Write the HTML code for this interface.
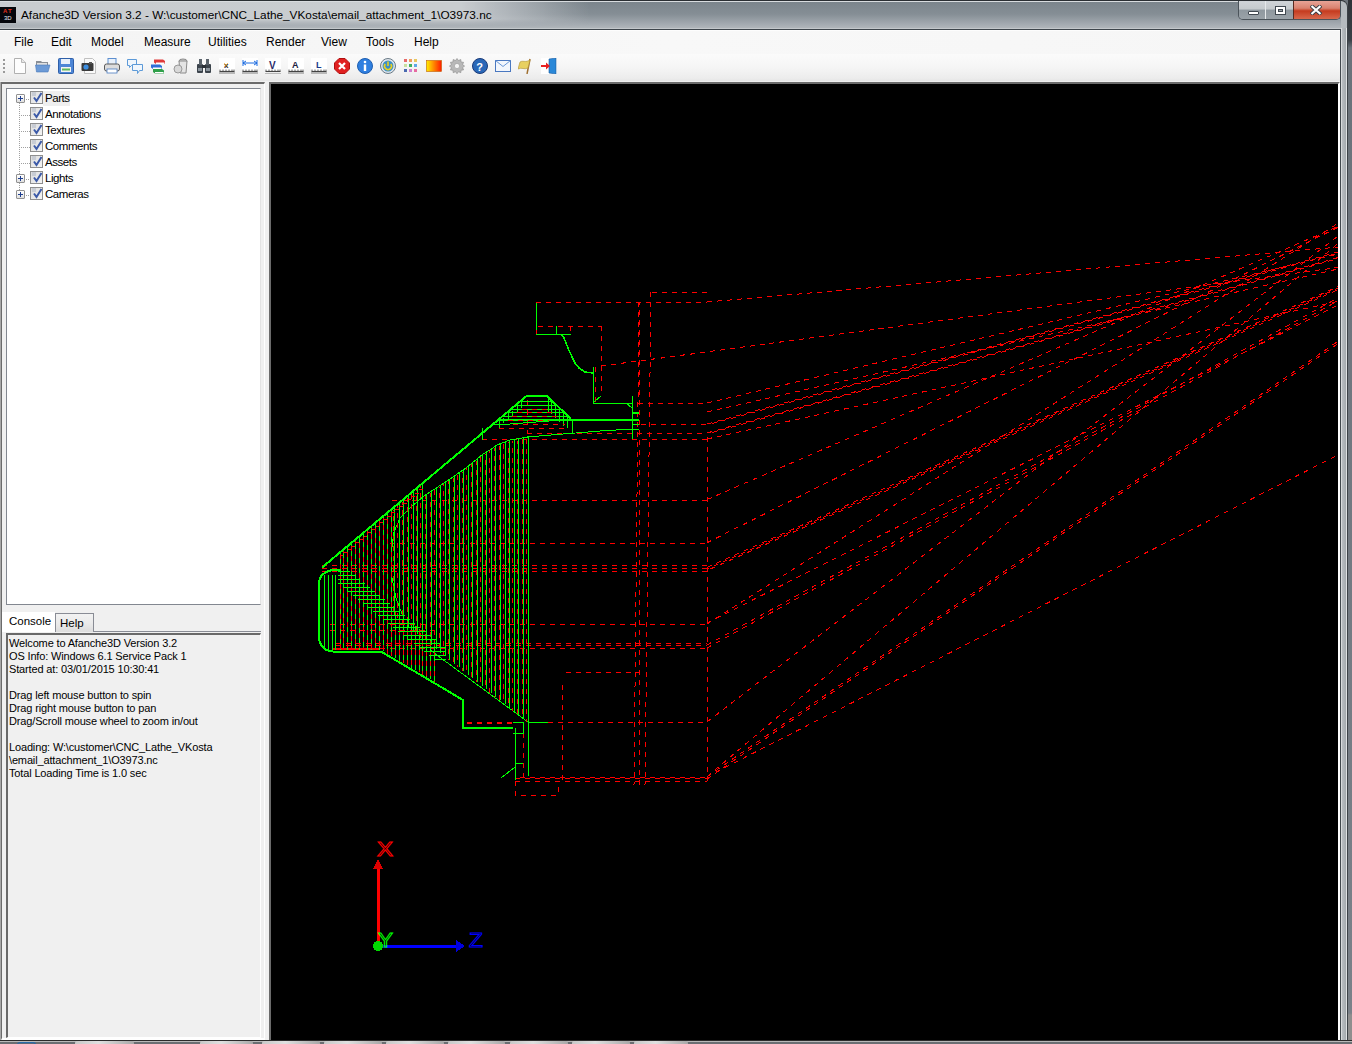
<!DOCTYPE html>
<html><head><meta charset="utf-8">
<style>
*{margin:0;padding:0;box-sizing:border-box}
html,body{width:1352px;height:1044px;overflow:hidden;background:#6f767d;font-family:"Liberation Sans",sans-serif;font-size:12px;color:#000}
.abs{position:absolute}
#desk{position:absolute;left:1348px;top:0;width:4px;height:1044px;background:linear-gradient(#2e3338 0,#3a4046 40px,#6a727a 48px,#7a8189 1013px,#8e8e8e 1015px)}
#frame{position:absolute;left:0;top:0;width:1348px;height:1041px;background:linear-gradient(90deg,#b9bec2,#c9cdd0 3px,#b5bbbf 6px);border-radius:0 7px 0 0;border-top:1px solid #2a2f33;border-right:1px solid #3c4247}
#tbg{position:absolute;left:0;top:1px;width:1341px;height:28px;background:linear-gradient(#7b858c 0,#858e95 12px,#a3aab0 22px,#b0b6ba 26px,#d6d9dc 27px);border-top:1px solid #d8dcdf}
#title{position:absolute;left:21px;top:8px;font-size:11.8px;color:#000;white-space:nowrap}
#client{position:absolute;left:0;top:29px;width:1341px;height:1012px;background:#f0f0f0;border-right:1px solid #41484d}
#menubar{position:absolute;left:0;top:0;width:100%;height:25px;background:linear-gradient(90deg,#f4f4f4,#f8f8f8 50%,#f6f6f6)}
#menubar span{position:absolute;top:6px;font-size:12px}
#toolbar{position:absolute;left:0;top:25px;width:100%;height:27px;background:linear-gradient(#fbfbfb,#f5f5f5 50%,#ececec 90%,#e6e6e6)}
.ic{position:absolute;top:4px;width:16px;height:16px}
#lpanel{position:absolute;left:1px;top:53px;width:264px;height:958px;border-top:2px solid #6b6b6b;border-left:1px solid #6b6b6b;border-bottom:2px solid #fff;border-right:1px solid #fff;background:#f0f0f0}
#tree{position:absolute;left:4px;top:4px;width:255px;height:517px;background:#fff;border:1px solid #828790;border-right-color:#e3e3e3;border-bottom-color:#828790}
.row{position:absolute;left:0;height:16px;width:240px;font-size:11.5px;letter-spacing:-0.45px}
.pl{position:absolute;left:9px;top:3px;width:9px;height:9px;border:1px solid #919191;border-radius:1px;background:linear-gradient(#fff,#e0e0e0)}
.pl:before{content:"";position:absolute;left:1px;top:3px;width:5px;height:1px;background:#1f3f8f}
.pl:after{content:"";position:absolute;left:3px;top:1px;width:1px;height:5px;background:#1f3f8f}
.cb{position:absolute;left:23px;top:0px;width:13px;height:13px;border:1px solid #8f8f8f;background:linear-gradient(135deg,#dcdcdc,#f4f4f4)}
.cb svg{position:absolute;left:1px;top:0}
.lb{position:absolute;left:36px;top:0px;padding:1px 2px}
.hl{position:absolute;left:12px;height:1px;border-top:1px dotted #a0a0a0}
#console{position:absolute;left:4px;top:549px;width:255px;height:405px;border-top:2px solid #696969;border-left:2px solid #696969;border-right:1px solid #fff;border-bottom:1px solid #fff;background:#f0f0f0;font-size:11px;letter-spacing:-0.15px;line-height:13px;padding:2px 0 0 1px;white-space:pre}
#vp{position:absolute;left:269px;top:53px;width:1071px;height:959px;border-top:2px solid #6b6b6b;border-left:2px solid #6b6b6b;border-right:2px solid #fff;background:#000;overflow:hidden}
#task{position:absolute;left:0;top:1040px;width:1352px;height:4px;background:linear-gradient(#2a2a2a 0,#2a2a2a 1px,#b8b8b8 1px,#b8b8b8 2px,#6a6e72 2px)}
</style></head><body>
<div id="desk"></div>
<div id="frame"></div>
<div id="tbg"></div><div class="abs" style="left:0;top:2px;width:640px;height:24px;background:linear-gradient(90deg,#c8ccd0 0,#c9cdd0 460px,rgba(200,204,208,0.7) 500px,rgba(200,204,208,0) 590px);-webkit-mask-image:linear-gradient(#000 0,#000 17px,transparent 24px);mask-image:linear-gradient(#000 0,#000 17px,transparent 24px)"></div><div class="abs" style="left:1341px;top:28px;width:6px;height:1012px;background:linear-gradient(90deg,#d8dbdd 0,#d8dbdd 1px,#b8bdc1 1px,#a4aaae 5px,#dfe2e4 5px)"></div>
<div class="abs" style="left:0;top:7px;width:16px;height:16px;background:#05070c">
  <div class="abs" style="left:3px;top:1px;font-size:6px;font-weight:bold;color:#e0301e;letter-spacing:1px">AT</div>
  <div class="abs" style="left:4px;top:8px;font-size:6px;color:#e8eef8">3D</div>
</div>
<div id="title">Afanche3D Version 3.2 - W:\customer\CNC_Lathe_VKosta\email_attachment_1\O3973.nc</div>
<!-- caption buttons -->
<div class="abs" style="left:1238px;top:1px;width:103px;height:19px;border:1px solid #4b535a;border-top:none;border-radius:0 0 5px 5px;overflow:hidden">
  <div class="abs" style="left:0;top:0;width:27px;height:18px;background:linear-gradient(#d0d4d8,#c5cacd 45%,#8f989f 50%,#9aa2a8);border-right:1px solid #e6e9eb"></div>
  <div class="abs" style="left:27px;top:0;width:28px;height:18px;background:linear-gradient(#d0d4d8,#c5cacd 45%,#8f989f 50%,#9aa2a8);border-right:1px solid #5a2a20"></div>
  <div class="abs" style="left:55px;top:0;width:47px;height:18px;background:linear-gradient(#e8a497,#d9826f 40%,#c53b1f 55%,#d8684c)"></div>
  <div class="abs" style="left:9px;top:10px;width:11px;height:4px;background:#fff;border:1px solid #404850;border-radius:1px"></div>
  <div class="abs" style="left:36px;top:5px;width:11px;height:9px;background:#fff;border:1px solid #404850"><div class="abs" style="left:2px;top:2px;width:5px;height:3px;background:#9aa2a8;border:1px solid #404850"></div></div>
  <svg class="abs" style="left:71px;top:4px" width="12" height="10" viewBox="0 0 12 10"><path d="M1 0.5 L11 9.5 M11 0.5 L1 9.5" stroke="#3a3f45" stroke-width="4"/><path d="M1.5 1 L10.5 9 M10.5 1 L1.5 9" stroke="#fff" stroke-width="2.2"/></svg>
</div>
<div id="client"><div class="abs" style="left:0;top:53px;width:1px;height:960px;background:#a8a8a8"></div>
  <div id="menubar"><div class="abs" style="left:0;top:0;width:100%;height:1px;background:#3e464c"></div><div class="abs" style="left:0;top:1px;width:100%;height:1px;background:#fdfdfd"></div>
    <span style="left:14px">File</span>
    <span style="left:51px">Edit</span>
    <span style="left:91px">Model</span>
    <span style="left:144px">Measure</span>
    <span style="left:208px">Utilities</span>
    <span style="left:266px">Render</span>
    <span style="left:321px">View</span>
    <span style="left:366px">Tools</span>
    <span style="left:414px">Help</span>
  </div>
  <div id="toolbar">
    <div class="abs" style="left:3px;top:5px;width:2px;height:15px;background:repeating-linear-gradient(#9a9a9a 0,#9a9a9a 2px,transparent 2px,transparent 4px)"></div>
    <!--ICONS--><svg class="ic" style="left:12px" width="16" height="16" viewBox="0 0 16 16"><path d="M2.5 0.5h7l4 4v11h-11z" fill="#fdfdfd" stroke="#b0b0b0"/><path d="M9.5 0.5v4h4" fill="#e8e8e8" stroke="#b8b8b8"/></svg><svg class="ic" style="left:35px" width="16" height="16" viewBox="0 0 16 16"><path d="M1 3h5l1 1h6v3H1z" fill="#8a8f96"/><path d="M2 5h10v3H2z" fill="#e0e0e0"/><path d="M0.5 7h14.5l-2 7H1.5z" fill="#6c9ad6" stroke="#4a78b8" stroke-width="0.6"/></svg><svg class="ic" style="left:58px" width="16" height="16" viewBox="0 0 16 16"><rect x="0.5" y="0.5" width="15" height="15" rx="1" fill="#4d86d6" stroke="#2f5fa8"/><rect x="3" y="1" width="9" height="5" fill="#e8f0fa"/><rect x="3" y="9" width="10" height="5" fill="#f4f4f4"/><rect x="4" y="10.5" width="8" height="2" fill="#5cb85c"/></svg><svg class="ic" style="left:81px" width="16" height="16" viewBox="0 0 16 16"><path d="M3.5 0.5h8l3 3v12h-11z" fill="#fafafa" stroke="#c0c0c0"/><rect x="0.5" y="5" width="12" height="8" rx="1" fill="#3a3a3a"/><circle cx="5" cy="9" r="2.6" fill="#3d8ee0"/><rect x="8" y="4" width="3" height="2" fill="#555"/></svg><svg class="ic" style="left:104px" width="16" height="16" viewBox="0 0 16 16"><rect x="4" y="0.5" width="8" height="6" fill="#e8f0fa" stroke="#5d8fd0"/><rect x="0.5" y="6" width="15" height="7" rx="2" fill="#dcdcdc" stroke="#5a5a5a"/><rect x="3" y="11" width="10" height="4" fill="#fff" stroke="#4a7cc0" stroke-width="0.8"/></svg><svg class="ic" style="left:127px" width="16" height="16" viewBox="0 0 16 16"><path d="M0.5 1.5h9v6h-5l-2 2v-2h-2z" fill="#f0f6fc" stroke="#5d9ad8"/><path d="M5.5 6.5h10v6h-3l-2 3v-3h-5z" fill="#f0f6fc" stroke="#5d9ad8"/></svg><svg class="ic" style="left:150px" width="16" height="16" viewBox="0 0 16 16"><path d="M4 1.5h9l2 1.5v3H6l-2-1.5z" fill="#e03a3a"/><path d="M6 4.5h8.5v1.5H6z" fill="#fff"/><path d="M1 6.5h9l2 1.5v3H3l-2-1.5z" fill="#2f6fd8"/><path d="M3 9.5h8.5V11H3z" fill="#fff"/><path d="M3 11h9l2 1.5v3H5l-2-1.5z" fill="#2fa04a"/><path d="M5 14h8.5v1.2H5z" fill="#fff"/></svg><svg class="ic" style="left:173px" width="16" height="16" viewBox="0 0 16 16"><ellipse cx="10" cy="3" rx="4" ry="2" fill="#d0d0d0" stroke="#888"/><path d="M6 3h8l-1 12H7z" fill="#e4e4e4" stroke="#8a8a8a"/><circle cx="5" cy="11" r="4" fill="#d8d8d8" stroke="#999"/></svg><svg class="ic" style="left:196px" width="16" height="16" viewBox="0 0 16 16"><rect x="1" y="6" width="6" height="9" rx="1" fill="#3c444c"/><rect x="9" y="6" width="6" height="9" rx="1" fill="#3c444c"/><rect x="3" y="1" width="3" height="6" fill="#5a636b"/><rect x="10" y="1" width="3" height="6" fill="#5a636b"/><rect x="6" y="7" width="4" height="3" fill="#2a3036"/><rect x="2" y="10" width="4" height="3" fill="#8a949c"/><rect x="10" y="10" width="4" height="3" fill="#8a949c"/></svg><svg class="ic" style="left:219px" width="16" height="16" viewBox="0 0 16 16"><rect x="0" y="0" width="16" height="16" fill="#fff"/><path d="M0.5 13.5h15" stroke="#444" stroke-width="1.2"/><path d="M1 11.5v2M4 11.5v2M7 11.5v2M10 11.5v2M13 11.5v2M15 11.5v2" stroke="#444" stroke-width="0.8"/><rect x="0" y="14" width="16" height="2" fill="#b8b8b8"/><text x="5" y="10" font-family="Liberation Sans" font-weight="bold" font-size="8" fill="#1a1a40">x</text><path d="M5 5l4 4M9 5l-4 4" stroke="#e8a000" stroke-width="0.6"/></svg><svg class="ic" style="left:242px" width="16" height="16" viewBox="0 0 16 16"><rect x="0" y="0" width="16" height="16" fill="#fff"/><path d="M0.5 13.5h15" stroke="#444" stroke-width="1.2"/><path d="M1 11.5v2M4 11.5v2M7 11.5v2M10 11.5v2M13 11.5v2M15 11.5v2" stroke="#444" stroke-width="0.8"/><rect x="0" y="14" width="16" height="2" fill="#b8b8b8"/><path d="M1 5h14M1 2v6M15 2v6M1 5l3-2M1 5l3 2M15 5l-3-2M15 5l-3 2" stroke="#1a6ae0" stroke-width="1" fill="none"/></svg><svg class="ic" style="left:265px" width="16" height="16" viewBox="0 0 16 16"><rect x="0" y="0" width="16" height="16" fill="#fff"/><path d="M0.5 13.5h15" stroke="#444" stroke-width="1.2"/><path d="M1 11.5v2M4 11.5v2M7 11.5v2M10 11.5v2M13 11.5v2M15 11.5v2" stroke="#444" stroke-width="0.8"/><rect x="0" y="15" width="16" height="2" fill="#b8b8b8"/><text x="4" y="11" font-family="Liberation Sans" font-weight="bold" font-size="10" fill="#2a2a6a">V</text></svg><svg class="ic" style="left:288px" width="16" height="16" viewBox="0 0 16 16"><rect x="0" y="0" width="16" height="16" fill="#fff"/><path d="M0.5 13.5h15" stroke="#444" stroke-width="1.2"/><path d="M1 11.5v2M4 11.5v2M7 11.5v2M10 11.5v2M13 11.5v2M15 11.5v2" stroke="#444" stroke-width="0.8"/><rect x="0" y="14" width="16" height="2" fill="#b8b8b8"/><text x="4" y="10" font-family="Liberation Sans" font-weight="bold" font-size="9" fill="#202040">A</text></svg><svg class="ic" style="left:311px" width="16" height="16" viewBox="0 0 16 16"><rect x="0" y="0" width="16" height="16" fill="#fff"/><path d="M0.5 13.5h15" stroke="#444" stroke-width="1.2"/><path d="M1 11.5v2M4 11.5v2M7 11.5v2M10 11.5v2M13 11.5v2M15 11.5v2" stroke="#444" stroke-width="0.8"/><rect x="0" y="14" width="16" height="2" fill="#b8b8b8"/><text x="5" y="10" font-family="Liberation Sans" font-weight="bold" font-size="9" fill="#1a3a8a">L</text></svg><svg class="ic" style="left:334px" width="16" height="16" viewBox="0 0 16 16"><path d="M5 0.5h6l4.5 4.5v6l-4.5 4.5h-6L0.5 11v-6z" fill="#e02020" stroke="#b01010"/><path d="M5 5l6 6M11 5l-6 6" stroke="#fff" stroke-width="2.2"/></svg><svg class="ic" style="left:357px" width="16" height="16" viewBox="0 0 16 16"><circle cx="8" cy="8" r="7.5" fill="#2f7fe0" stroke="#1f5fb0"/><circle cx="8" cy="4" r="1.3" fill="#fff"/><rect x="6.8" y="6.5" width="2.4" height="6.5" fill="#fff"/></svg><svg class="ic" style="left:380px" width="16" height="16" viewBox="0 0 16 16"><circle cx="8" cy="8" r="7.5" fill="#dfe6ec" stroke="#6a7a86"/><circle cx="8" cy="8" r="5.5" fill="#3a8ec8"/><path d="M5.2 6a3.5 3.5 0 1 0 5.6 0" stroke="#e8d020" stroke-width="1.6" fill="none"/><path d="M8 3.5v4.5" stroke="#e8d020" stroke-width="1.6"/></svg><svg class="ic" style="left:403px" width="16" height="16" viewBox="0 0 16 16"><rect x="1" y="1" width="3" height="3" fill="#e86a6a"/><rect x="6" y="1" width="3" height="3" fill="#f0a060"/><rect x="11" y="1" width="3" height="3" fill="#e8c860"/><rect x="1" y="6" width="3" height="3" fill="#c8e0a0"/><rect x="6" y="6" width="3" height="3" fill="#40b060"/><rect x="11" y="6" width="3" height="3" fill="#60a8e8"/><rect x="1" y="11" width="3" height="3" fill="#4a6ab0"/><rect x="6" y="11" width="3" height="3" fill="#d080d0"/><rect x="11" y="11" width="3" height="3" fill="#e86aa0"/></svg><svg class="ic" style="left:426px" width="16" height="16" viewBox="0 0 16 16"><defs><linearGradient id="gr1"><stop offset="0" stop-color="#ffee00"/><stop offset="1" stop-color="#ff1a00"/></linearGradient></defs><rect x="0.5" y="2.5" width="15" height="11" fill="url(#gr1)" stroke="#c06000" stroke-width="0.6"/></svg><svg class="ic" style="left:449px" width="16" height="16" viewBox="0 0 16 16"><path d="M8 0.5l1.5 2 2.3-1 0.3 2.5 2.5 0.3-1 2.3 2 1.5-2 1.5 1 2.3-2.5 0.3-0.3 2.5-2.3-1-1.5 2-1.5-2-2.3 1-0.3-2.5-2.5-0.3 1-2.3-2-1.5 2-1.5-1-2.3 2.5-0.3 0.3-2.5 2.3 1z" fill="#b8b8b8" stroke="#8a8a8a" stroke-width="0.6"/><circle cx="8" cy="8" r="2.6" fill="#f4f4f4" stroke="#999" stroke-width="0.6"/></svg><svg class="ic" style="left:472px" width="16" height="16" viewBox="0 0 16 16"><circle cx="8" cy="8" r="7.5" fill="#2a68b8" stroke="#1a3a78"/><text x="4.3" y="12.5" font-family="Liberation Sans" font-weight="bold" font-size="11" fill="#fff">?</text></svg><svg class="ic" style="left:495px" width="16" height="16" viewBox="0 0 16 16"><rect x="0.5" y="2.5" width="15" height="11" fill="#f2f6fc" stroke="#4a78c0"/><path d="M0.5 2.5l7.5 6 7.5-6" stroke="#6a98d8" fill="none"/></svg><svg class="ic" style="left:518px" width="16" height="16" viewBox="0 0 16 16"><path d="M12 1l-3 15" stroke="#a07030" stroke-width="1.5"/><path d="M2 4c3-2 5 1 10-2l-2 8c-4 2-6-1-10 1z" fill="#e8d060" stroke="#b09030" stroke-width="0.6"/></svg><svg class="ic" style="left:541px" width="16" height="16" viewBox="0 0 16 16"><rect x="0" y="0" width="16" height="16" fill="#fff"/><path d="M8 1l7-1v16l-7-1z" fill="#2a88d8" stroke="#1a5aa0" stroke-width="0.6"/><path d="M0 7h5v-2.5l4 3.5-4 3.5v-2.5H0z" fill="#e82020"/></svg><!--/ICONS-->
  </div>
  <div id="lpanel">
    <div id="tree">
      <div class="abs" style="left:12px;top:13px;width:1px;height:96px;border-left:1px dotted #a0a0a0"></div>
      <div class="row" style="top:2px"><div class="pl"></div><div class="hl" style="left:19px;top:8px;width:5px"></div><div class="cb"><svg width="11" height="11" viewBox="0 0 11 11"><rect x="0" y="0" width="4" height="4" fill="#c8ccd4"/><path d="M2 5.5 L4.5 9 L9.5 1" stroke="#3c5aa8" stroke-width="2" fill="none"/></svg></div><div class="abs" style="background:#efefef;width:27px;left:36px;height:15px;top:0"></div><div class="lb">Parts</div></div>
      <div class="row" style="top:18px"><div class="hl" style="top:8px;width:11px"></div><div class="cb"><svg width="11" height="11" viewBox="0 0 11 11"><rect x="0" y="0" width="4" height="4" fill="#c8ccd4"/><path d="M2 5.5 L4.5 9 L9.5 1" stroke="#3c5aa8" stroke-width="2" fill="none"/></svg></div><div class="lb">Annotations</div></div>
      <div class="row" style="top:34px"><div class="hl" style="top:8px;width:11px"></div><div class="cb"><svg width="11" height="11" viewBox="0 0 11 11"><rect x="0" y="0" width="4" height="4" fill="#c8ccd4"/><path d="M2 5.5 L4.5 9 L9.5 1" stroke="#3c5aa8" stroke-width="2" fill="none"/></svg></div><div class="lb">Textures</div></div>
      <div class="row" style="top:50px"><div class="hl" style="top:8px;width:11px"></div><div class="cb"><svg width="11" height="11" viewBox="0 0 11 11"><rect x="0" y="0" width="4" height="4" fill="#c8ccd4"/><path d="M2 5.5 L4.5 9 L9.5 1" stroke="#3c5aa8" stroke-width="2" fill="none"/></svg></div><div class="lb">Comments</div></div>
      <div class="row" style="top:66px"><div class="hl" style="top:8px;width:11px"></div><div class="cb"><svg width="11" height="11" viewBox="0 0 11 11"><rect x="0" y="0" width="4" height="4" fill="#c8ccd4"/><path d="M2 5.5 L4.5 9 L9.5 1" stroke="#3c5aa8" stroke-width="2" fill="none"/></svg></div><div class="lb">Assets</div></div>
      <div class="row" style="top:82px"><div class="pl"></div><div class="hl" style="left:19px;top:8px;width:5px"></div><div class="cb"><svg width="11" height="11" viewBox="0 0 11 11"><rect x="0" y="0" width="4" height="4" fill="#c8ccd4"/><path d="M2 5.5 L4.5 9 L9.5 1" stroke="#3c5aa8" stroke-width="2" fill="none"/></svg></div><div class="lb">Lights</div></div>
      <div class="row" style="top:98px"><div class="pl"></div><div class="hl" style="left:19px;top:8px;width:5px"></div><div class="cb"><svg width="11" height="11" viewBox="0 0 11 11"><rect x="0" y="0" width="4" height="4" fill="#c8ccd4"/><path d="M2 5.5 L4.5 9 L9.5 1" stroke="#3c5aa8" stroke-width="2" fill="none"/></svg></div><div class="lb">Cameras</div></div>
    </div>
    <!-- tabs -->
    <div class="abs" style="left:0px;top:528px;width:53px;height:20px;background:#fff;font-size:11.5px;padding:3px 0 0 7px">Console</div>
    <div class="abs" style="left:53px;top:529px;width:39px;height:19px;border:1px solid #898c95;border-bottom:none;background:linear-gradient(#f2f2f2,#ebebeb 50%,#dcdcdc);font-size:11.5px;padding:3px 0 0 4px">Help</div>
    <div class="abs" style="left:92px;top:547px;width:167px;height:1px;background:#898c95"></div>
    <div id="console">Welcome to Afanche3D Version 3.2
OS Info: Windows 6.1 Service Pack 1
Started at: 03/01/2015 10:30:41

Drag left mouse button to spin
Drag right mouse button to pan
Drag/Scroll mouse wheel to zoom in/out

Loading: W:\customer\CNC_Lathe_VKosta
\email_attachment_1\O3973.nc
Total Loading Time is 1.0 sec</div>
  </div>
  <div id="vp">
    <!--DRAWING--><svg width="1067" height="957" viewBox="271 84 1067 957" style="position:absolute;left:0;top:0" shape-rendering="crispEdges"><polyline points="707.0,302.0 1338.0,247.1" stroke="#ff0000" stroke-width="1" fill="none" stroke-dasharray="5 5" stroke-dashoffset="0"/><polyline points="601.0,366.0 1338.0,267.5" stroke="#ff0000" stroke-width="1" fill="none" stroke-dasharray="5 5" stroke-dashoffset="0"/><polyline points="707.0,403.0 1338.0,254.1" stroke="#ff0000" stroke-width="1" fill="none" stroke-dasharray="5 5" stroke-dashoffset="0"/><polyline points="707.0,412.0 1338.0,269.0" stroke="#ff0000" stroke-width="1" fill="none" stroke-dasharray="5 5" stroke-dashoffset="0"/><polyline points="707.0,424.0 1338.0,252.0" stroke="#ff0000" stroke-width="1" fill="none" stroke-dasharray="5 5" stroke-dashoffset="0"/><polyline points="707.0,425.0 1338.0,253.0" stroke="#ff0000" stroke-width="1" fill="none" stroke-dasharray="5 5" stroke-dashoffset="5"/><polyline points="707.0,433.0 1338.0,257.6" stroke="#ff0000" stroke-width="1" fill="none" stroke-dasharray="5 5" stroke-dashoffset="0"/><polyline points="707.0,434.0 1338.0,258.6" stroke="#ff0000" stroke-width="1" fill="none" stroke-dasharray="5 5" stroke-dashoffset="5"/><polyline points="707.0,439.0 1338.0,301.4" stroke="#ff0000" stroke-width="1" fill="none" stroke-dasharray="5 5" stroke-dashoffset="0"/><polyline points="707.0,499.6 1338.0,226.4" stroke="#ff0000" stroke-width="1" fill="none" stroke-dasharray="5 5" stroke-dashoffset="0"/><polyline points="707.0,542.7 1338.0,227.2" stroke="#ff0000" stroke-width="1" fill="none" stroke-dasharray="5 5" stroke-dashoffset="0"/><polyline points="707.0,567.5 1338.0,286.7" stroke="#ff0000" stroke-width="1" fill="none" stroke-dasharray="5 5" stroke-dashoffset="0"/><polyline points="707.0,569.0 1338.0,288.2" stroke="#ff0000" stroke-width="1" fill="none" stroke-dasharray="5 5" stroke-dashoffset="3"/><polyline points="707.0,570.5 1338.0,289.7" stroke="#ff0000" stroke-width="1" fill="none" stroke-dasharray="5 5" stroke-dashoffset="6"/><polyline points="707.0,624.0 1338.0,223.3" stroke="#ff0000" stroke-width="1" fill="none" stroke-dasharray="5 5" stroke-dashoffset="0"/><polyline points="707.0,623.0 1338.0,305.0" stroke="#ff0000" stroke-width="1" fill="none" stroke-dasharray="5 5" stroke-dashoffset="0"/><polyline points="707.0,645.0 1338.0,297.9" stroke="#ff0000" stroke-width="1" fill="none" stroke-dasharray="5 5" stroke-dashoffset="0"/><polyline points="707.0,648.0 1338.0,300.9" stroke="#ff0000" stroke-width="1" fill="none" stroke-dasharray="5 5" stroke-dashoffset="0"/><polyline points="707.0,722.0 1338.0,236.1" stroke="#ff0000" stroke-width="1" fill="none" stroke-dasharray="5 5" stroke-dashoffset="0"/><polyline points="707.0,776.7 1338.0,243.5" stroke="#ff0000" stroke-width="1" fill="none" stroke-dasharray="5 5" stroke-dashoffset="0"/><polyline points="707.0,776.7 1338.0,341.3" stroke="#ff0000" stroke-width="1" fill="none" stroke-dasharray="5 5" stroke-dashoffset="0"/><polyline points="707.0,779.0 1338.0,343.6" stroke="#ff0000" stroke-width="1" fill="none" stroke-dasharray="5 5" stroke-dashoffset="0"/><polyline points="707.0,776.7 1338.0,454.9" stroke="#ff0000" stroke-width="1" fill="none" stroke-dasharray="5 5" stroke-dashoffset="0"/><polyline points="536.0,302.0 707.0,302.0" stroke="#ff0000" stroke-width="1" fill="none" stroke-dasharray="5 5" stroke-dashoffset="0"/><polyline points="652.0,292.0 708.0,292.0" stroke="#ff0000" stroke-width="1" fill="none" stroke-dasharray="5 5" stroke-dashoffset="0"/><polyline points="651.0,292.0 645.0,785.0" stroke="#ff0000" stroke-width="1" fill="none" stroke-dasharray="5 5" stroke-dashoffset="0"/><polyline points="639.0,302.0 634.0,785.0" stroke="#ff0000" stroke-width="1" fill="none" stroke-dasharray="5 5" stroke-dashoffset="0"/><polyline points="640.0,302.0 639.0,785.0" stroke="#ff0000" stroke-width="1" fill="none" stroke-dasharray="5 5" stroke-dashoffset="2"/><polyline points="707.0,437.0 707.0,781.0" stroke="#ff0000" stroke-width="1" fill="none" stroke-dasharray="5 5" stroke-dashoffset="0"/><polyline points="538.0,326.0 601.0,326.0" stroke="#ff0000" stroke-width="1" fill="none" stroke-dasharray="5 5" stroke-dashoffset="0"/><polyline points="601.0,326.0 601.0,396.0" stroke="#ff0000" stroke-width="1" fill="none" stroke-dasharray="5 5" stroke-dashoffset="0"/><polyline points="570.0,326.0 570.0,334.0" stroke="#ff0000" stroke-width="1" fill="none" stroke-dasharray="5 5" stroke-dashoffset="0"/><polyline points="595.0,367.0 595.0,402.0" stroke="#ff0000" stroke-width="1" fill="none" stroke-dasharray="5 5" stroke-dashoffset="0"/><polyline points="601.0,366.0 707.0,352.0" stroke="#ff0000" stroke-width="1" fill="none" stroke-dasharray="5 5" stroke-dashoffset="0"/><polyline points="638.0,403.0 707.0,403.0" stroke="#ff0000" stroke-width="1" fill="none" stroke-dasharray="5 5" stroke-dashoffset="0"/><polyline points="641.0,424.0 707.0,424.0" stroke="#ff0000" stroke-width="1" fill="none" stroke-dasharray="5 5" stroke-dashoffset="0"/><polyline points="527.0,433.0 707.0,433.0" stroke="#ff0000" stroke-width="1" fill="none" stroke-dasharray="5 5" stroke-dashoffset="0"/><polyline points="482.0,439.0 707.0,439.0" stroke="#ff0000" stroke-width="1" fill="none" stroke-dasharray="5 5" stroke-dashoffset="0"/><polyline points="527.5,400.0 527.5,433.0" stroke="#ff0000" stroke-width="1" fill="none" stroke-dasharray="5 5" stroke-dashoffset="0"/><polyline points="392.0,500.0 707.0,500.0" stroke="#ff0000" stroke-width="1" fill="none" stroke-dasharray="5 5" stroke-dashoffset="0"/><polyline points="390.0,543.5 707.0,543.5" stroke="#ff0000" stroke-width="1" fill="none" stroke-dasharray="5 5" stroke-dashoffset="0"/><polyline points="322.0,565.0 707.0,565.0" stroke="#ff0000" stroke-width="1" fill="none" stroke-dasharray="5 5" stroke-dashoffset="0"/><polyline points="322.0,568.0 707.0,568.0" stroke="#ff0000" stroke-width="1" fill="none" stroke-dasharray="5 5" stroke-dashoffset="0"/><polyline points="322.0,571.0 707.0,571.0" stroke="#ff0000" stroke-width="1" fill="none" stroke-dasharray="5 5" stroke-dashoffset="0"/><polyline points="330.0,624.0 707.0,624.0" stroke="#ff0000" stroke-width="1" fill="none" stroke-dasharray="5 5" stroke-dashoffset="0"/><polyline points="336.0,643.5 707.0,643.5" stroke="#ff0000" stroke-width="1" fill="none" stroke-dasharray="5 5" stroke-dashoffset="0"/><polyline points="336.0,645.5 707.0,645.5" stroke="#ff0000" stroke-width="1" fill="none" stroke-dasharray="5 5" stroke-dashoffset="0"/><polyline points="380.0,648.0 707.0,648.0" stroke="#ff0000" stroke-width="1" fill="none" stroke-dasharray="5 5" stroke-dashoffset="0"/><polyline points="548.0,722.0 707.0,722.0" stroke="#ff0000" stroke-width="1" fill="none" stroke-dasharray="5 5" stroke-dashoffset="0"/><polyline points="330.0,630.5 440.0,630.5" stroke="#ff0000" stroke-width="1" fill="none" stroke-dasharray="5 5" stroke-dashoffset="0"/><polyline points="515.0,778.0 707.0,778.0" stroke="#ff0000" stroke-width="1" fill="none" stroke-dasharray="5 5" stroke-dashoffset="0"/><polyline points="515.0,777.0 707.0,777.0" stroke="#ff0000" stroke-width="1" fill="none" stroke-dasharray="5 5" stroke-dashoffset="5"/><polyline points="515.0,781.0 707.0,781.0" stroke="#ff0000" stroke-width="1" fill="none" stroke-dasharray="5 5" stroke-dashoffset="0"/><polyline points="515.0,781.0 515.0,795.0 558.0,795.0 558.0,781.0" stroke="#ff0000" stroke-width="1" fill="none" stroke-dasharray="5 5" stroke-dashoffset="0"/><polyline points="562.0,780.0 562.0,680.0" stroke="#ff0000" stroke-width="1" fill="none" stroke-dasharray="5 5" stroke-dashoffset="0"/><polyline points="566.0,672.0 640.0,672.0" stroke="#ff0000" stroke-width="1" fill="none" stroke-dasharray="5 5" stroke-dashoffset="0"/><polyline points="523.0,733.0 523.0,780.0" stroke="#ff0000" stroke-width="1" fill="none" stroke-dasharray="5 5" stroke-dashoffset="0"/><polyline points="467.0,723.0 513.0,723.0" stroke="#ff0000" stroke-width="2" fill="none" stroke-dasharray="5 5" stroke-dashoffset="0"/><polyline points="333.0,649.0 380.0,649.0" stroke="#ff0000" stroke-width="2" fill="none"/><polyline points="536.0,303.0 536.0,330.0" stroke="#00ff00" stroke-width="1" fill="none"/><polyline points="536.0,330.0 536.0,334.0" stroke="#ff0000" stroke-width="1" fill="none"/><polyline points="536.0,334.0 571.0,334.0" stroke="#00ff00" stroke-width="1" fill="none"/><polyline points="556.0,326.0 556.0,334.0" stroke="#00ff00" stroke-width="1" fill="none"/><polyline points="561.0,334.0 564.0,338.0 568.0,348.0 572.0,357.0 575.0,363.0 579.0,368.0 585.0,372.0 593.0,373.0" stroke="#00ff00" stroke-width="1.5" fill="none"/><polyline points="593.5,367.0 593.5,403.0 632.0,403.0" stroke="#00ff00" stroke-width="1" fill="none"/><polyline points="594.0,402.0 601.0,396.0" stroke="#00ff00" stroke-width="1" fill="none"/><polyline points="632.0,396.0 632.0,439.0" stroke="#00ff00" stroke-width="1" fill="none"/><polyline points="626.0,403.0 632.0,408.0" stroke="#00ff00" stroke-width="1" fill="none"/><polyline points="498.0,419.5 639.0,419.5" stroke="#00ff00" stroke-width="2" fill="none"/><polyline points="632.0,412.0 639.0,412.0" stroke="#00ff00" stroke-width="1" fill="none"/><polyline points="632.0,413.5 639.0,413.5" stroke="#00ff00" stroke-width="1" fill="none"/><polyline points="632.0,424.0 639.0,424.0" stroke="#00ff00" stroke-width="1" fill="none"/><polyline points="632.0,429.0 639.0,429.0" stroke="#00ff00" stroke-width="1" fill="none"/><polyline points="322.0,567.5 526.0,396.5" stroke="#00ff00" stroke-width="2" fill="none"/><polyline points="526.0,396.0 547.0,396.0 571.0,419.0" stroke="#00ff00" stroke-width="2" fill="none"/><polyline points="520.2,401.4 552.6,401.4" stroke="#00ff00" stroke-width="1" fill="none"/><polyline points="515.4,405.4 556.8,405.4" stroke="#00ff00" stroke-width="1" fill="none"/><polyline points="511.1,409.0 560.6,409.0" stroke="#00ff00" stroke-width="1" fill="none"/><polyline points="507.0,412.5 564.2,412.5" stroke="#00ff00" stroke-width="1" fill="none"/><polyline points="502.2,416.5 568.4,416.5" stroke="#00ff00" stroke-width="1" fill="none"/><polyline points="499.0,420.0 499.0,427.6" stroke="#00ff00" stroke-width="1" fill="none"/><polyline points="503.5,417.8 503.5,423.0" stroke="#00ff00" stroke-width="1" fill="none"/><polyline points="508.4,413.0 508.4,420.5" stroke="#00ff00" stroke-width="1" fill="none"/><polyline points="512.4,410.7 512.4,416.0" stroke="#00ff00" stroke-width="1" fill="none"/><polyline points="517.3,406.0 517.3,411.6" stroke="#00ff00" stroke-width="1" fill="none"/><polyline points="521.7,402.3 521.7,408.0" stroke="#00ff00" stroke-width="1" fill="none"/><polyline points="548.8,397.7 548.8,411.7" stroke="#00ff00" stroke-width="1" fill="none"/><polyline points="551.4,400.2 551.4,414.2" stroke="#00ff00" stroke-width="1" fill="none"/><polyline points="555.4,404.0 555.4,418.0" stroke="#00ff00" stroke-width="1" fill="none"/><polyline points="559.4,407.9 559.4,421.9" stroke="#00ff00" stroke-width="1" fill="none"/><polyline points="563.4,411.7 563.4,425.7" stroke="#00ff00" stroke-width="1" fill="none"/><polyline points="567.4,415.5 567.4,428.0" stroke="#00ff00" stroke-width="1" fill="none"/><polyline points="522.0,409.0 550.0,409.0" stroke="#ff0000" stroke-width="1" fill="none" stroke-dasharray="5 5" stroke-dashoffset="0"/><polyline points="517.0,412.5 555.0,412.5" stroke="#ff0000" stroke-width="1" fill="none" stroke-dasharray="5 5" stroke-dashoffset="0"/><polyline points="512.0,416.5 560.0,416.5" stroke="#ff0000" stroke-width="1" fill="none" stroke-dasharray="5 5" stroke-dashoffset="0"/><polyline points="508.0,420.5 555.0,420.5" stroke="#ff0000" stroke-width="1" fill="none" stroke-dasharray="5 5" stroke-dashoffset="0"/><polyline points="503.0,424.5 565.0,424.5" stroke="#ff0000" stroke-width="1" fill="none" stroke-dasharray="5 5" stroke-dashoffset="0"/><polyline points="499.0,428.5 568.0,428.5" stroke="#ff0000" stroke-width="1" fill="none" stroke-dasharray="5 5" stroke-dashoffset="0"/><polyline points="527.0,433.0 575.0,433.0" stroke="#ff0000" stroke-width="1" fill="none" stroke-dasharray="5 5" stroke-dashoffset="0"/><polyline points="494.0,424.5 510.0,424.0 555.4,420.5" stroke="#00ff00" stroke-width="1" fill="none"/><polyline points="532.0,395.5 547.0,395.5" stroke="#00ff00" stroke-width="2" fill="none"/><polyline points="572.5,419.0 572.5,433.0" stroke="#00ff00" stroke-width="1" fill="none"/><polyline points="527.0,437.0 600.0,431.0 632.0,429.0" stroke="#00ff00" stroke-width="1" fill="none"/><polyline points="482.0,428.0 482.0,440.0" stroke="#00ff00" stroke-width="1" fill="none"/><polyline points="528.0,437.0 510.0,440.0 497.0,445.0 490.0,450.0 483.0,454.0 466.0,468.0 447.0,481.0 424.0,496.0 410.0,508.0" stroke="#00ff00" stroke-width="1" fill="none"/><polyline points="410.0,508.0 400.0,518.0 394.0,532.0 391.0,555.0 392.0,578.0 396.0,598.0 402.0,614.0" stroke="#00ff00" stroke-width="1" fill="none"/><polyline points="340.0,570.0 332.0,570.0 326.0,572.0 321.0,576.0 318.5,583.0 318.5,638.0 321.0,645.0 326.0,650.0 333.0,651.5 381.0,651.5 463.0,700.0 463.0,728.0 513.0,728.0" stroke="#00ff00" stroke-width="2" fill="none"/><polyline points="528.5,437.0 528.5,776.0" stroke="#00ff00" stroke-width="1" fill="none"/><polyline points="528.0,722.0 548.0,722.0" stroke="#00ff00" stroke-width="1" fill="none"/><polyline points="515.0,728.0 515.0,780.0" stroke="#00ff00" stroke-width="1" fill="none"/><polyline points="515.0,763.0 523.0,763.0" stroke="#00ff00" stroke-width="1" fill="none"/><polyline points="501.0,778.0 515.0,767.0" stroke="#00ff00" stroke-width="1" fill="none"/><polyline points="513.0,722.0 523.0,722.0 523.0,733.0 513.0,733.0" stroke="#00ff00" stroke-width="1" fill="none"/><polyline points="430.0,650.0 528.0,722.0" stroke="#00ff00" stroke-width="1" fill="none"/><polyline points="528.1,437.0 528.1,722.1" stroke="#00ff00" stroke-width="1" fill="none"/><polyline points="526.6,439.0 526.6,722.1" stroke="#ff0000" stroke-width="1" fill="none" stroke-dasharray="5 5" stroke-dashoffset="0"/><polyline points="523.5,437.8 523.5,718.5" stroke="#00ff00" stroke-width="1" fill="none"/><polyline points="522.0,439.8 522.0,718.5" stroke="#ff0000" stroke-width="1" fill="none" stroke-dasharray="5 5" stroke-dashoffset="1"/><polyline points="518.9,438.5 518.9,714.8" stroke="#00ff00" stroke-width="1" fill="none"/><polyline points="517.4,440.5 517.4,714.8" stroke="#ff0000" stroke-width="1" fill="none" stroke-dasharray="5 5" stroke-dashoffset="2"/><polyline points="514.3,439.3 514.3,711.2" stroke="#00ff00" stroke-width="1" fill="none"/><polyline points="512.8,441.3 512.8,711.2" stroke="#ff0000" stroke-width="1" fill="none" stroke-dasharray="5 5" stroke-dashoffset="3"/><polyline points="509.7,440.1 509.7,707.5" stroke="#00ff00" stroke-width="1" fill="none"/><polyline points="508.2,442.1 508.2,707.5" stroke="#ff0000" stroke-width="1" fill="none" stroke-dasharray="5 5" stroke-dashoffset="4"/><polyline points="505.1,441.9 505.1,703.8" stroke="#00ff00" stroke-width="1" fill="none"/><polyline points="503.6,443.9 503.6,703.8" stroke="#ff0000" stroke-width="1" fill="none" stroke-dasharray="5 5" stroke-dashoffset="0"/><polyline points="500.5,443.7 500.5,700.2" stroke="#00ff00" stroke-width="1" fill="none"/><polyline points="499.0,445.7 499.0,700.2" stroke="#ff0000" stroke-width="1" fill="none" stroke-dasharray="5 5" stroke-dashoffset="1"/><polyline points="495.9,445.8 495.9,696.5" stroke="#00ff00" stroke-width="1" fill="none"/><polyline points="494.4,447.8 494.4,696.5" stroke="#ff0000" stroke-width="1" fill="none" stroke-dasharray="5 5" stroke-dashoffset="2"/><polyline points="491.3,449.1 491.3,692.9" stroke="#00ff00" stroke-width="1" fill="none"/><polyline points="489.8,451.1 489.8,692.9" stroke="#ff0000" stroke-width="1" fill="none" stroke-dasharray="5 5" stroke-dashoffset="3"/><polyline points="486.7,451.9 486.7,689.2" stroke="#00ff00" stroke-width="1" fill="none"/><polyline points="485.2,453.9 485.2,689.2" stroke="#ff0000" stroke-width="1" fill="none" stroke-dasharray="5 5" stroke-dashoffset="4"/><polyline points="482.1,454.7 482.1,685.6" stroke="#00ff00" stroke-width="1" fill="none"/><polyline points="480.6,456.7 480.6,685.6" stroke="#ff0000" stroke-width="1" fill="none" stroke-dasharray="5 5" stroke-dashoffset="0"/><polyline points="477.5,458.5 477.5,681.9" stroke="#00ff00" stroke-width="1" fill="none"/><polyline points="476.0,460.5 476.0,681.9" stroke="#ff0000" stroke-width="1" fill="none" stroke-dasharray="5 5" stroke-dashoffset="1"/><polyline points="472.9,462.3 472.9,678.2" stroke="#00ff00" stroke-width="1" fill="none"/><polyline points="471.4,464.3 471.4,678.2" stroke="#ff0000" stroke-width="1" fill="none" stroke-dasharray="5 5" stroke-dashoffset="2"/><polyline points="468.3,466.1 468.3,674.6" stroke="#00ff00" stroke-width="1" fill="none"/><polyline points="466.8,468.1 466.8,674.6" stroke="#ff0000" stroke-width="1" fill="none" stroke-dasharray="5 5" stroke-dashoffset="3"/><polyline points="463.7,469.6 463.7,670.9" stroke="#00ff00" stroke-width="1" fill="none"/><polyline points="462.2,471.6 462.2,670.9" stroke="#ff0000" stroke-width="1" fill="none" stroke-dasharray="5 5" stroke-dashoffset="4"/><polyline points="459.1,472.7 459.1,667.3" stroke="#00ff00" stroke-width="1" fill="none"/><polyline points="457.6,474.7 457.6,667.3" stroke="#ff0000" stroke-width="1" fill="none" stroke-dasharray="5 5" stroke-dashoffset="0"/><polyline points="454.5,475.9 454.5,663.6" stroke="#00ff00" stroke-width="1" fill="none"/><polyline points="453.0,477.9 453.0,663.6" stroke="#ff0000" stroke-width="1" fill="none" stroke-dasharray="5 5" stroke-dashoffset="1"/><polyline points="449.9,479.0 449.9,660.0" stroke="#00ff00" stroke-width="1" fill="none"/><polyline points="448.4,481.0 448.4,660.0" stroke="#ff0000" stroke-width="1" fill="none" stroke-dasharray="5 5" stroke-dashoffset="2"/><polyline points="445.3,482.1 445.3,656.3" stroke="#00ff00" stroke-width="1" fill="none"/><polyline points="443.8,484.1 443.8,656.3" stroke="#ff0000" stroke-width="1" fill="none" stroke-dasharray="5 5" stroke-dashoffset="3"/><polyline points="440.7,485.1 440.7,652.6" stroke="#00ff00" stroke-width="1" fill="none"/><polyline points="439.2,487.1 439.2,652.6" stroke="#ff0000" stroke-width="1" fill="none" stroke-dasharray="5 5" stroke-dashoffset="4"/><polyline points="436.1,488.1 436.1,649.0" stroke="#00ff00" stroke-width="1" fill="none"/><polyline points="434.6,490.1 434.6,649.0" stroke="#ff0000" stroke-width="1" fill="none" stroke-dasharray="5 5" stroke-dashoffset="0"/><polyline points="431.5,491.1 431.5,645.3" stroke="#00ff00" stroke-width="1" fill="none"/><polyline points="430.0,493.1 430.0,645.3" stroke="#ff0000" stroke-width="1" fill="none" stroke-dasharray="5 5" stroke-dashoffset="1"/><polyline points="426.9,494.1 426.9,641.7" stroke="#00ff00" stroke-width="1" fill="none"/><polyline points="425.4,496.1 425.4,641.7" stroke="#ff0000" stroke-width="1" fill="none" stroke-dasharray="5 5" stroke-dashoffset="2"/><polyline points="422.3,484.4 422.3,638.0" stroke="#00ff00" stroke-width="1" fill="none"/><polyline points="420.8,486.4 420.8,638.0" stroke="#ff0000" stroke-width="1" fill="none" stroke-dasharray="5 5" stroke-dashoffset="3"/><polyline points="417.7,488.3 417.7,634.4" stroke="#00ff00" stroke-width="1" fill="none"/><polyline points="416.2,490.3 416.2,634.4" stroke="#ff0000" stroke-width="1" fill="none" stroke-dasharray="5 5" stroke-dashoffset="4"/><polyline points="413.1,492.2 413.1,630.7" stroke="#00ff00" stroke-width="1" fill="none"/><polyline points="411.6,494.2 411.6,630.7" stroke="#ff0000" stroke-width="1" fill="none" stroke-dasharray="5 5" stroke-dashoffset="0"/><polyline points="408.5,496.0 408.5,627.0" stroke="#00ff00" stroke-width="1" fill="none"/><polyline points="407.0,498.0 407.0,627.0" stroke="#ff0000" stroke-width="1" fill="none" stroke-dasharray="5 5" stroke-dashoffset="1"/><polyline points="403.9,499.9 403.9,623.4" stroke="#00ff00" stroke-width="1" fill="none"/><polyline points="402.4,501.9 402.4,623.4" stroke="#ff0000" stroke-width="1" fill="none" stroke-dasharray="5 5" stroke-dashoffset="2"/><polyline points="399.3,503.7 399.3,619.7" stroke="#00ff00" stroke-width="1" fill="none"/><polyline points="397.8,505.7 397.8,619.7" stroke="#ff0000" stroke-width="1" fill="none" stroke-dasharray="5 5" stroke-dashoffset="3"/><polyline points="394.7,507.6 394.7,616.1" stroke="#00ff00" stroke-width="1" fill="none"/><polyline points="393.2,509.6 393.2,616.1" stroke="#ff0000" stroke-width="1" fill="none" stroke-dasharray="5 5" stroke-dashoffset="4"/><polyline points="324.4,575.0 324.4,650.0" stroke="#00ff00" stroke-width="1" fill="none"/><polyline points="328.7,575.0 328.7,650.0" stroke="#00ff00" stroke-width="1" fill="none"/><polyline points="332.3,575.0 332.3,650.0" stroke="#00ff00" stroke-width="1" fill="none"/><polyline points="335.9,575.0 335.9,650.0" stroke="#00ff00" stroke-width="1" fill="none"/><polyline points="340.0,553.4 340.0,650.0" stroke="#00ff00" stroke-width="1" fill="none"/><polyline points="340.0,554.4 340.0,650.0" stroke="#ff0000" stroke-width="1" fill="none" stroke-dasharray="5 5" stroke-dashoffset="0"/><polyline points="340.0,555.9 344.0,555.9" stroke="#ff0000" stroke-width="1" fill="none"/><polyline points="343.9,550.1 343.9,650.0" stroke="#00ff00" stroke-width="1" fill="none"/><polyline points="343.9,551.1 343.9,650.0" stroke="#ff0000" stroke-width="1" fill="none" stroke-dasharray="5 5" stroke-dashoffset="3"/><polyline points="343.9,552.6 347.9,552.6" stroke="#ff0000" stroke-width="1" fill="none"/><polyline points="347.9,546.8 347.9,650.0" stroke="#00ff00" stroke-width="1" fill="none"/><polyline points="347.9,547.8 347.9,650.0" stroke="#ff0000" stroke-width="1" fill="none" stroke-dasharray="5 5" stroke-dashoffset="6"/><polyline points="347.9,549.3 351.9,549.3" stroke="#ff0000" stroke-width="1" fill="none"/><polyline points="351.8,543.5 351.8,650.0" stroke="#00ff00" stroke-width="1" fill="none"/><polyline points="351.8,544.5 351.8,650.0" stroke="#ff0000" stroke-width="1" fill="none" stroke-dasharray="5 5" stroke-dashoffset="9"/><polyline points="351.8,546.0 355.8,546.0" stroke="#ff0000" stroke-width="1" fill="none"/><polyline points="355.8,540.2 355.8,650.0" stroke="#00ff00" stroke-width="1" fill="none"/><polyline points="355.8,541.2 355.8,650.0" stroke="#ff0000" stroke-width="1" fill="none" stroke-dasharray="5 5" stroke-dashoffset="2"/><polyline points="355.8,542.7 359.8,542.7" stroke="#ff0000" stroke-width="1" fill="none"/><polyline points="359.7,536.9 359.7,650.0" stroke="#00ff00" stroke-width="1" fill="none"/><polyline points="359.7,537.9 359.7,650.0" stroke="#ff0000" stroke-width="1" fill="none" stroke-dasharray="5 5" stroke-dashoffset="5"/><polyline points="359.7,539.4 363.7,539.4" stroke="#ff0000" stroke-width="1" fill="none"/><polyline points="363.7,533.6 363.7,650.0" stroke="#00ff00" stroke-width="1" fill="none"/><polyline points="363.7,534.6 363.7,650.0" stroke="#ff0000" stroke-width="1" fill="none" stroke-dasharray="5 5" stroke-dashoffset="8"/><polyline points="363.7,536.1 367.7,536.1" stroke="#ff0000" stroke-width="1" fill="none"/><polyline points="367.6,530.2 367.6,650.0" stroke="#00ff00" stroke-width="1" fill="none"/><polyline points="367.6,531.2 367.6,650.0" stroke="#ff0000" stroke-width="1" fill="none" stroke-dasharray="5 5" stroke-dashoffset="1"/><polyline points="367.6,532.7 371.6,532.7" stroke="#ff0000" stroke-width="1" fill="none"/><polyline points="371.6,526.9 371.6,650.0" stroke="#00ff00" stroke-width="1" fill="none"/><polyline points="371.6,527.9 371.6,650.0" stroke="#ff0000" stroke-width="1" fill="none" stroke-dasharray="5 5" stroke-dashoffset="4"/><polyline points="371.6,529.4 375.6,529.4" stroke="#ff0000" stroke-width="1" fill="none"/><polyline points="375.5,523.6 375.5,650.0" stroke="#00ff00" stroke-width="1" fill="none"/><polyline points="375.5,524.6 375.5,650.0" stroke="#ff0000" stroke-width="1" fill="none" stroke-dasharray="5 5" stroke-dashoffset="7"/><polyline points="375.5,526.1 379.5,526.1" stroke="#ff0000" stroke-width="1" fill="none"/><polyline points="379.5,520.3 379.5,650.0" stroke="#00ff00" stroke-width="1" fill="none"/><polyline points="379.5,521.3 379.5,650.0" stroke="#ff0000" stroke-width="1" fill="none" stroke-dasharray="5 5" stroke-dashoffset="0"/><polyline points="379.5,522.8 383.5,522.8" stroke="#ff0000" stroke-width="1" fill="none"/><polyline points="383.4,517.0 383.4,651.4" stroke="#00ff00" stroke-width="1" fill="none"/><polyline points="383.4,518.0 383.4,651.4" stroke="#ff0000" stroke-width="1" fill="none" stroke-dasharray="5 5" stroke-dashoffset="3"/><polyline points="383.4,519.5 387.4,519.5" stroke="#ff0000" stroke-width="1" fill="none"/><polyline points="387.4,513.7 387.4,653.7" stroke="#00ff00" stroke-width="1" fill="none"/><polyline points="387.4,514.7 387.4,653.7" stroke="#ff0000" stroke-width="1" fill="none" stroke-dasharray="5 5" stroke-dashoffset="6"/><polyline points="387.4,516.2 391.4,516.2" stroke="#ff0000" stroke-width="1" fill="none"/><polyline points="391.3,510.4 391.3,656.1" stroke="#00ff00" stroke-width="1" fill="none"/><polyline points="391.3,511.4 391.3,656.1" stroke="#ff0000" stroke-width="1" fill="none" stroke-dasharray="5 5" stroke-dashoffset="9"/><polyline points="391.3,512.9 395.3,512.9" stroke="#ff0000" stroke-width="1" fill="none"/><polyline points="395.3,610.6 395.3,658.4" stroke="#00ff00" stroke-width="1" fill="none"/><polyline points="395.3,611.6 395.3,658.4" stroke="#ff0000" stroke-width="1" fill="none" stroke-dasharray="5 5" stroke-dashoffset="2"/><polyline points="395.3,509.6 399.3,509.6" stroke="#ff0000" stroke-width="1" fill="none"/><polyline points="399.2,613.7 399.2,660.7" stroke="#00ff00" stroke-width="1" fill="none"/><polyline points="399.2,614.7 399.2,660.7" stroke="#ff0000" stroke-width="1" fill="none" stroke-dasharray="5 5" stroke-dashoffset="5"/><polyline points="399.2,506.3 403.2,506.3" stroke="#ff0000" stroke-width="1" fill="none"/><polyline points="403.2,616.8 403.2,663.0" stroke="#00ff00" stroke-width="1" fill="none"/><polyline points="403.2,617.8 403.2,663.0" stroke="#ff0000" stroke-width="1" fill="none" stroke-dasharray="5 5" stroke-dashoffset="8"/><polyline points="403.2,503.0 407.2,503.0" stroke="#ff0000" stroke-width="1" fill="none"/><polyline points="407.1,620.0 407.1,665.3" stroke="#00ff00" stroke-width="1" fill="none"/><polyline points="407.1,621.0 407.1,665.3" stroke="#ff0000" stroke-width="1" fill="none" stroke-dasharray="5 5" stroke-dashoffset="1"/><polyline points="407.1,499.6 411.1,499.6" stroke="#ff0000" stroke-width="1" fill="none"/><polyline points="411.1,623.1 411.1,667.6" stroke="#00ff00" stroke-width="1" fill="none"/><polyline points="411.1,624.1 411.1,667.6" stroke="#ff0000" stroke-width="1" fill="none" stroke-dasharray="5 5" stroke-dashoffset="4"/><polyline points="411.1,496.3 415.1,496.3" stroke="#ff0000" stroke-width="1" fill="none"/><polyline points="415.0,626.3 415.0,669.9" stroke="#00ff00" stroke-width="1" fill="none"/><polyline points="415.0,627.3 415.0,669.9" stroke="#ff0000" stroke-width="1" fill="none" stroke-dasharray="5 5" stroke-dashoffset="7"/><polyline points="415.0,493.0 419.0,493.0" stroke="#ff0000" stroke-width="1" fill="none"/><polyline points="419.0,629.4 419.0,672.2" stroke="#00ff00" stroke-width="1" fill="none"/><polyline points="419.0,630.4 419.0,672.2" stroke="#ff0000" stroke-width="1" fill="none" stroke-dasharray="5 5" stroke-dashoffset="0"/><polyline points="419.0,489.7 423.0,489.7" stroke="#ff0000" stroke-width="1" fill="none"/><polyline points="422.9,632.5 422.9,674.6" stroke="#00ff00" stroke-width="1" fill="none"/><polyline points="422.9,633.5 422.9,674.6" stroke="#ff0000" stroke-width="1" fill="none" stroke-dasharray="5 5" stroke-dashoffset="3"/><polyline points="426.9,635.7 426.9,676.9" stroke="#00ff00" stroke-width="1" fill="none"/><polyline points="426.9,636.7 426.9,676.9" stroke="#ff0000" stroke-width="1" fill="none" stroke-dasharray="5 5" stroke-dashoffset="6"/><polyline points="430.8,638.8 430.8,679.2" stroke="#00ff00" stroke-width="1" fill="none"/><polyline points="430.8,639.8 430.8,679.2" stroke="#ff0000" stroke-width="1" fill="none" stroke-dasharray="5 5" stroke-dashoffset="9"/><polyline points="434.8,642.0 434.8,681.5" stroke="#00ff00" stroke-width="1" fill="none"/><polyline points="434.8,643.0 434.8,681.5" stroke="#ff0000" stroke-width="1" fill="none" stroke-dasharray="5 5" stroke-dashoffset="2"/><polyline points="338.0,571.8 350.0,571.8" stroke="#00ff00" stroke-width="1" fill="none"/><polyline points="343.0,575.8 355.0,575.8" stroke="#00ff00" stroke-width="1" fill="none"/><polyline points="348.1,579.8 360.1,579.8" stroke="#00ff00" stroke-width="1" fill="none"/><polyline points="353.1,583.8 365.1,583.8" stroke="#00ff00" stroke-width="1" fill="none"/><polyline points="358.1,587.8 370.1,587.8" stroke="#00ff00" stroke-width="1" fill="none"/><polyline points="363.2,591.8 375.2,591.8" stroke="#00ff00" stroke-width="1" fill="none"/><polyline points="368.2,595.8 380.2,595.8" stroke="#00ff00" stroke-width="1" fill="none"/><polyline points="373.2,599.8 385.2,599.8" stroke="#00ff00" stroke-width="1" fill="none"/><polyline points="378.3,603.8 390.3,603.8" stroke="#00ff00" stroke-width="1" fill="none"/><polyline points="383.3,607.8 395.3,607.8" stroke="#00ff00" stroke-width="1" fill="none"/><polyline points="388.3,611.8 400.3,611.8" stroke="#00ff00" stroke-width="1" fill="none"/><polyline points="393.3,615.8 405.3,615.8" stroke="#00ff00" stroke-width="1" fill="none"/><polyline points="398.4,619.8 410.4,619.8" stroke="#00ff00" stroke-width="1" fill="none"/><polyline points="403.4,623.8 415.4,623.8" stroke="#00ff00" stroke-width="1" fill="none"/><polyline points="408.4,627.8 420.4,627.8" stroke="#00ff00" stroke-width="1" fill="none"/><polyline points="413.5,631.8 425.5,631.8" stroke="#00ff00" stroke-width="1" fill="none"/><polyline points="418.5,635.8 430.5,635.8" stroke="#00ff00" stroke-width="1" fill="none"/><polyline points="423.5,639.8 435.5,639.8" stroke="#00ff00" stroke-width="1" fill="none"/><polyline points="428.6,643.8 440.6,643.8" stroke="#00ff00" stroke-width="1" fill="none"/><polyline points="433.6,647.8 445.6,647.8" stroke="#00ff00" stroke-width="1" fill="none"/><polyline points="338.0,575.8 350.0,575.8" stroke="#00ff00" stroke-width="1" fill="none"/><polyline points="343.0,579.8 355.0,579.8" stroke="#00ff00" stroke-width="1" fill="none"/><polyline points="348.1,583.8 360.1,583.8" stroke="#00ff00" stroke-width="1" fill="none"/><polyline points="353.1,587.8 365.1,587.8" stroke="#00ff00" stroke-width="1" fill="none"/><polyline points="358.1,591.8 370.1,591.8" stroke="#00ff00" stroke-width="1" fill="none"/><polyline points="363.2,595.8 375.2,595.8" stroke="#00ff00" stroke-width="1" fill="none"/><polyline points="368.2,599.8 380.2,599.8" stroke="#00ff00" stroke-width="1" fill="none"/><polyline points="373.2,603.8 385.2,603.8" stroke="#00ff00" stroke-width="1" fill="none"/><polyline points="378.3,607.8 390.3,607.8" stroke="#00ff00" stroke-width="1" fill="none"/><polyline points="383.3,611.8 395.3,611.8" stroke="#00ff00" stroke-width="1" fill="none"/><polyline points="388.3,615.8 400.3,615.8" stroke="#00ff00" stroke-width="1" fill="none"/><polyline points="393.3,619.8 405.3,619.8" stroke="#00ff00" stroke-width="1" fill="none"/><polyline points="398.4,623.8 410.4,623.8" stroke="#00ff00" stroke-width="1" fill="none"/><polyline points="403.4,627.8 415.4,627.8" stroke="#00ff00" stroke-width="1" fill="none"/><polyline points="408.4,631.8 420.4,631.8" stroke="#00ff00" stroke-width="1" fill="none"/><polyline points="413.5,635.8 425.5,635.8" stroke="#00ff00" stroke-width="1" fill="none"/><polyline points="418.5,639.8 430.5,639.8" stroke="#00ff00" stroke-width="1" fill="none"/><polyline points="423.5,643.8 435.5,643.8" stroke="#00ff00" stroke-width="1" fill="none"/><polyline points="428.6,647.8 440.6,647.8" stroke="#00ff00" stroke-width="1" fill="none"/><polyline points="433.6,651.8 445.6,651.8" stroke="#00ff00" stroke-width="1" fill="none"/><polyline points="338.0,579.8 350.0,579.8" stroke="#00ff00" stroke-width="1" fill="none"/><polyline points="343.0,583.8 355.0,583.8" stroke="#00ff00" stroke-width="1" fill="none"/><polyline points="348.1,587.8 360.1,587.8" stroke="#00ff00" stroke-width="1" fill="none"/><polyline points="353.1,591.8 365.1,591.8" stroke="#00ff00" stroke-width="1" fill="none"/><polyline points="358.1,595.8 370.1,595.8" stroke="#00ff00" stroke-width="1" fill="none"/><polyline points="363.2,599.8 375.2,599.8" stroke="#00ff00" stroke-width="1" fill="none"/><polyline points="368.2,603.8 380.2,603.8" stroke="#00ff00" stroke-width="1" fill="none"/><polyline points="373.2,607.8 385.2,607.8" stroke="#00ff00" stroke-width="1" fill="none"/><polyline points="378.3,611.8 390.3,611.8" stroke="#00ff00" stroke-width="1" fill="none"/><polyline points="383.3,615.8 395.3,615.8" stroke="#00ff00" stroke-width="1" fill="none"/><polyline points="388.3,619.8 400.3,619.8" stroke="#00ff00" stroke-width="1" fill="none"/><polyline points="393.3,623.8 405.3,623.8" stroke="#00ff00" stroke-width="1" fill="none"/><polyline points="398.4,627.8 410.4,627.8" stroke="#00ff00" stroke-width="1" fill="none"/><polyline points="403.4,631.8 415.4,631.8" stroke="#00ff00" stroke-width="1" fill="none"/><polyline points="408.4,635.8 420.4,635.8" stroke="#00ff00" stroke-width="1" fill="none"/><polyline points="413.5,639.8 425.5,639.8" stroke="#00ff00" stroke-width="1" fill="none"/><polyline points="418.5,643.8 430.5,643.8" stroke="#00ff00" stroke-width="1" fill="none"/><polyline points="423.5,647.8 435.5,647.8" stroke="#00ff00" stroke-width="1" fill="none"/><polyline points="428.6,651.8 440.6,651.8" stroke="#00ff00" stroke-width="1" fill="none"/><polyline points="433.6,655.8 445.6,655.8" stroke="#00ff00" stroke-width="1" fill="none"/><polyline points="338.0,583.8 350.0,583.8" stroke="#00ff00" stroke-width="1" fill="none"/><polyline points="343.0,587.8 355.0,587.8" stroke="#00ff00" stroke-width="1" fill="none"/><polyline points="348.1,591.8 360.1,591.8" stroke="#00ff00" stroke-width="1" fill="none"/><polyline points="353.1,595.8 365.1,595.8" stroke="#00ff00" stroke-width="1" fill="none"/><polyline points="358.1,599.8 370.1,599.8" stroke="#00ff00" stroke-width="1" fill="none"/><polyline points="363.2,603.8 375.2,603.8" stroke="#00ff00" stroke-width="1" fill="none"/><polyline points="368.2,607.8 380.2,607.8" stroke="#00ff00" stroke-width="1" fill="none"/><polyline points="373.2,611.8 385.2,611.8" stroke="#00ff00" stroke-width="1" fill="none"/><polyline points="378.3,615.8 390.3,615.8" stroke="#00ff00" stroke-width="1" fill="none"/><polyline points="383.3,619.8 395.3,619.8" stroke="#00ff00" stroke-width="1" fill="none"/><polyline points="388.3,623.8 400.3,623.8" stroke="#00ff00" stroke-width="1" fill="none"/><polyline points="393.3,627.8 405.3,627.8" stroke="#00ff00" stroke-width="1" fill="none"/><polyline points="398.4,631.8 410.4,631.8" stroke="#00ff00" stroke-width="1" fill="none"/><polyline points="403.4,635.8 415.4,635.8" stroke="#00ff00" stroke-width="1" fill="none"/><polyline points="408.4,639.8 420.4,639.8" stroke="#00ff00" stroke-width="1" fill="none"/><polyline points="413.5,643.8 425.5,643.8" stroke="#00ff00" stroke-width="1" fill="none"/><polyline points="418.5,647.8 430.5,647.8" stroke="#00ff00" stroke-width="1" fill="none"/><polyline points="423.5,651.8 435.5,651.8" stroke="#00ff00" stroke-width="1" fill="none"/><polyline points="428.6,655.8 440.6,655.8" stroke="#00ff00" stroke-width="1" fill="none"/><polyline points="433.6,659.8 445.6,659.8" stroke="#00ff00" stroke-width="1" fill="none"/><line x1="378" y1="945" x2="378" y2="866" stroke="#ff0000" stroke-width="3"/><polygon points="373,869 383,869 378,859" fill="#dd0000"/><line x1="381" y1="946" x2="458" y2="946" stroke="#0000ff" stroke-width="3"/><polygon points="456,940 465,946 456,952" fill="#0000dd"/><circle cx="378" cy="946" r="5" fill="#00d800"/><text x="377" y="856" font-family="Liberation Sans" font-size="20.5" textLength="16" lengthAdjust="spacingAndGlyphs" fill="none" stroke="#ff0000" stroke-width="1" shape-rendering="geometricPrecision">X</text><text x="378" y="947" font-family="Liberation Sans" font-size="20.5" textLength="15" lengthAdjust="spacingAndGlyphs" fill="none" stroke="#00ff00" stroke-width="1" shape-rendering="geometricPrecision">Y</text><text x="469" y="947" font-family="Liberation Sans" font-size="20.5" textLength="14" lengthAdjust="spacingAndGlyphs" fill="none" stroke="#0000ff" stroke-width="1" shape-rendering="geometricPrecision">Z</text></svg><!--/DRAWING-->
  </div>
</div>
<div id="task"><div class="abs" style="left:75px;top:1px;width:59px;height:3px;background:linear-gradient(90deg,#c8c8c8,#e0e0e0 40%,#a8a8a8);border-radius:2px 2px 0 0"></div><div class="abs" style="left:200px;top:1px;width:53px;height:3px;background:linear-gradient(90deg,#c8c8c8,#e0e0e0 40%,#a8a8a8);border-radius:2px 2px 0 0"></div><div class="abs" style="left:262px;top:1px;width:58px;height:3px;background:linear-gradient(90deg,#c8c8c8,#e0e0e0 40%,#a8a8a8);border-radius:2px 2px 0 0"></div><div class="abs" style="left:324px;top:1px;width:58px;height:3px;background:linear-gradient(90deg,#c8c8c8,#e0e0e0 40%,#a8a8a8);border-radius:2px 2px 0 0"></div><div class="abs" style="left:386px;top:1px;width:58px;height:3px;background:linear-gradient(90deg,#c8c8c8,#e0e0e0 40%,#a8a8a8);border-radius:2px 2px 0 0"></div><div class="abs" style="left:448px;top:1px;width:57px;height:3px;background:linear-gradient(90deg,#c8c8c8,#e0e0e0 40%,#a8a8a8);border-radius:2px 2px 0 0"></div><div class="abs" style="left:510px;top:1px;width:58px;height:3px;background:linear-gradient(90deg,#c8c8c8,#e0e0e0 40%,#a8a8a8);border-radius:2px 2px 0 0"></div><div class="abs" style="left:572px;top:1px;width:58px;height:3px;background:linear-gradient(90deg,#c8c8c8,#e0e0e0 40%,#a8a8a8);border-radius:2px 2px 0 0"></div><div class="abs" style="left:634px;top:1px;width:54px;height:3px;background:linear-gradient(90deg,#c8c8c8,#e0e0e0 40%,#a8a8a8);border-radius:2px 2px 0 0"></div><div class="abs" style="left:17px;top:2px;width:19px;height:3px;border-radius:10px 10px 0 0;border:1px solid #2a6aa8;border-bottom:none;background:#5a6a7a"></div></div>
</body></html>
